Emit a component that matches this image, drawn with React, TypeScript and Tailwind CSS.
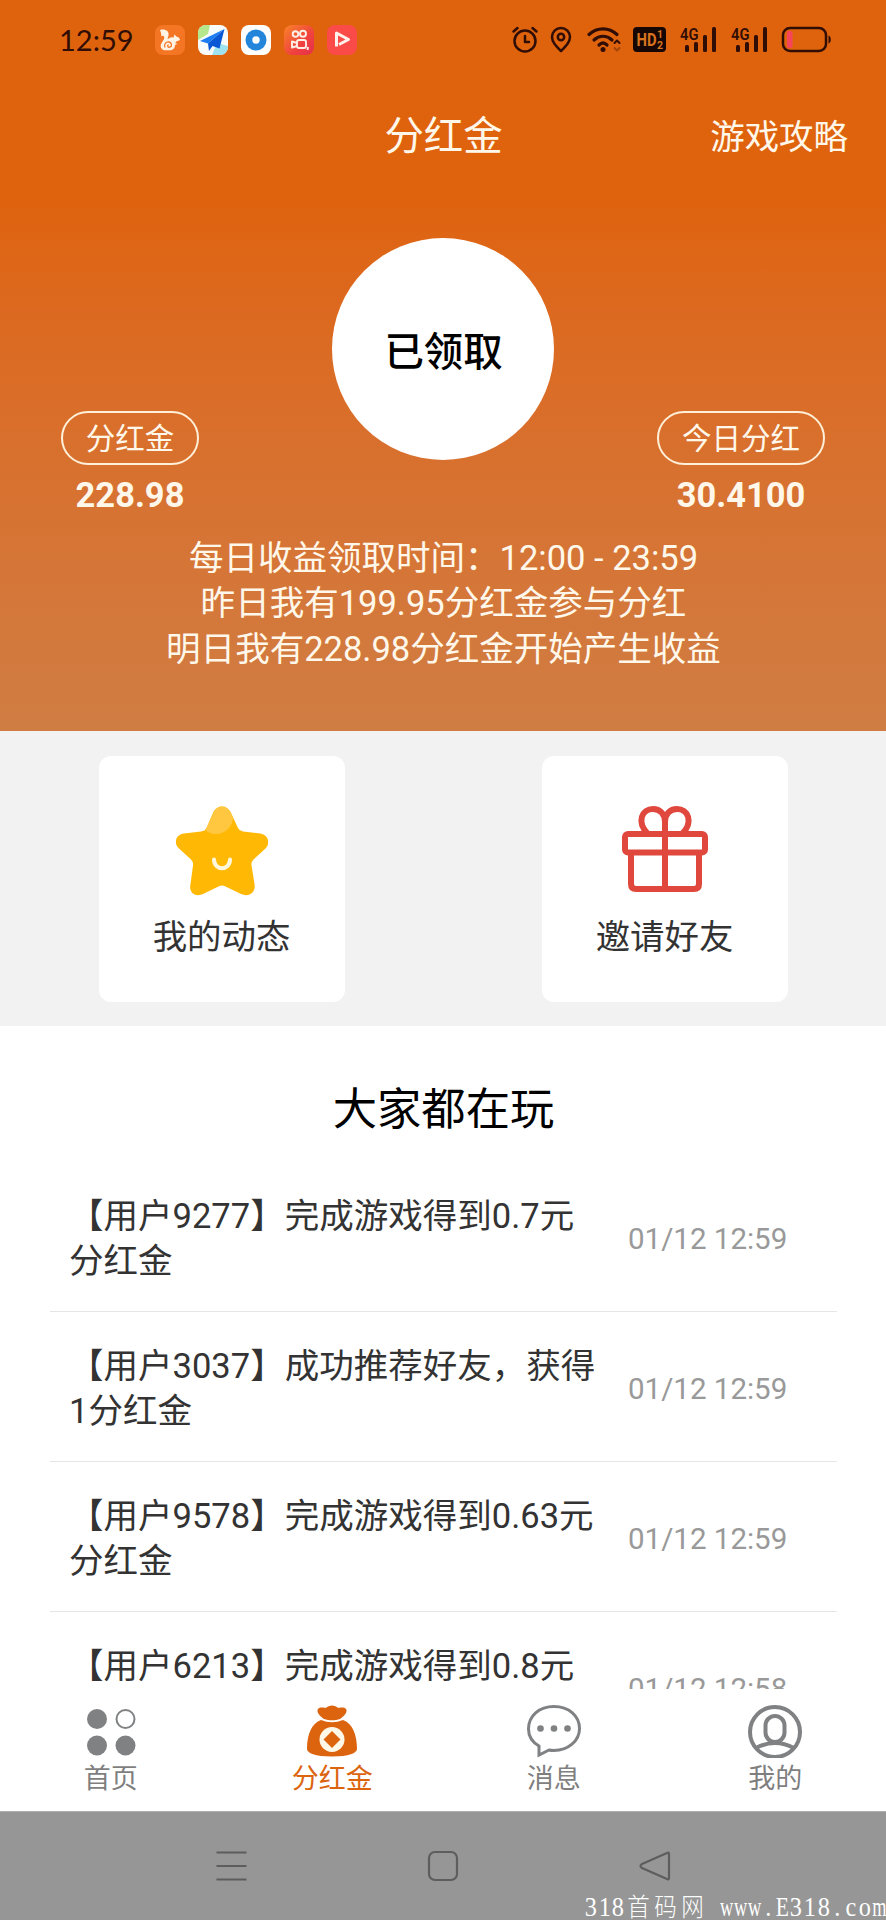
import type { ReactNode } from "react";

const records = [
  { first: "【用户9277】完成游戏得到0.7元", second: "分红金", time: "01/12 12:59" },
  { first: "【用户3037】成功推荐好友，获得", second: "1分红金", time: "01/12 12:59" },
  { first: "【用户9578】完成游戏得到0.63元", second: "分红金", time: "01/12 12:59" },
  { first: "【用户6213】完成游戏得到0.8元", second: "分红金", time: "01/12 12:58" },
];

function AppBadges() {
  return (
    <div className="ml-[22px] flex gap-[13px]">
      <svg width="30" height="30" viewBox="0 0 30 30">
        <rect width="30" height="30" rx="8" fill="#f47624" />
        <path d="M5 5c5-1.500 9.500 1 8.500 5.500-.3 1.500-1 2.500-.8 3.800 1.800-2 4-2.500 6-1.800l.8-3.200 1.800 2.200c2 .3 3.200 1.500 3.700 3-.8 1.200-2 1.700-3.500 1.700-.5 1-1 1.500-1.500 2l2.500.5-2.500 1.300c0 3-1.500 4.700-4 5.200H9.500c-3-.7-4.500-3-3.500-6 .8-2.500 3.500-4.200 3.300-6.700C9 10.500 7 10.500 6 11.500c1-3-.5-4.500-1-6.500z" fill="#fff3e4" />
        <path d="M10 22.500c-1.500-3 1-6 4-5.500 3 .6 3.300 4.500.8 5.200-1.800.4-3-1.700-1.300-2.700" fill="none" stroke="#f47624" strokeWidth="1.300" />
      </svg>
      <svg width="30" height="30" viewBox="0 0 30 30">
        <defs><clipPath id="mapClip"><rect width="30" height="30" rx="8" /></clipPath></defs>
        <g clipPath="url(#mapClip)">
          <rect width="30" height="30" fill="#f7fbfa" />
          <path d="M0 0h12L10 9 0 15z" fill="#b5e78c" />
          <path d="M14 30l5-12 11 3v9z" fill="#9fe3f0" />
          <path d="M26.500 4L2 16l8 2.500z" fill="#1c7cf2" />
          <path d="M26.500 4L10 18.500 11 26l3.500-5 7 2.500z" fill="#0a57d6" />
        </g>
      </svg>
      <svg width="30" height="30" viewBox="0 0 30 30">
        <rect width="30" height="30" rx="8" fill="#fff" />
        <circle cx="15" cy="15" r="10.500" fill="#2386db" />
        <circle cx="15" cy="15" r="3.700" fill="#fff" />
      </svg>
      <svg width="30" height="30" viewBox="0 0 30 30">
        <defs><linearGradient id="camera" x1="0" y1="0" x2="1" y2="1"><stop stopColor="#f98428" /><stop offset=".6" stopColor="#f0423f" /><stop offset="1" stopColor="#e52d4b" /></linearGradient></defs>
        <rect width="30" height="30" rx="8" fill="url(#camera)" />
        <g fill="none" stroke="#fff0e6" strokeWidth="1.900" strokeLinejoin="round">
          <circle cx="11.500" cy="9" r="2.800" /><circle cx="19" cy="8.800" r="3" />
          <rect x="13" y="15" width="9" height="8" rx="2" /><path d="M13 18l-5-1.500v6l5-1.500M24 22l-.5 3" />
        </g>
      </svg>
      <svg width="30" height="30" viewBox="0 0 30 30">
        <rect width="30" height="30" rx="8" fill="#fa4b48" />
        <path d="M9.500 21.500V8l12 6.500-9.500 5" fill="none" stroke="#fff1eb" strokeWidth="3" strokeLinejoin="round" />
      </svg>
    </div>
  );
}

function Signal({ x }: { x: number }) {
  return (
    <g transform={`translate(${x} 0)`} fill="#300d05">
      <text x="0" y="19.500" fontSize="17" fontWeight="600" textLength="18.500" lengthAdjust="spacingAndGlyphs" className="font-['Roboto']">4G</text>
      <rect x="5" y="25" width="4" height="7" rx="1.500" />
      <rect x="14" y="22" width="4" height="10" rx="1.500" />
      <rect x="23" y="15" width="4" height="17" rx="1.500" />
      <rect x="32" y="7" width="4" height="25" rx="1.500" />
    </g>
  );
}

function SystemIcons() {
  return (
    <svg width="330" height="40" viewBox="0 0 330 40">
      <g fill="none" stroke="#300d05" strokeWidth="2.500" strokeLinecap="round" strokeLinejoin="round">
        <circle cx="15" cy="21" r="10.500" /><path d="M15 16v6h4M3.500 11.500l4-3.500M26.500 11.500L22.500 8" />
        <path d="M51 31c-5-5-9-9-9-14a9 9 0 0118 0c0 5-4 9-9 14z" /><circle cx="51" cy="17" r="3.200" />
        <g strokeWidth="3.200"><path d="M79 14.500c8-7.500 20-7.500 28 0M84 20c5.500-5 12.500-5 18 0" /><path d="M89 25c2.500-2.500 5.500-2.500 8 0" /></g>
        <path d="M104.500 23l2.500-2.500 2.500 2.500" strokeWidth="2" />
        <path d="M104.500 28l2.500 2.500 2.500-2.500" strokeWidth="2" opacity=".35" />
        <rect x="273" y="8" width="43" height="23" rx="7" />
      </g>
      <circle cx="93" cy="29.500" r="2.500" fill="#300d05" />
      <rect x="123" y="7" width="33" height="25" rx="4" fill="#170704" />
      <g fill="#d9741f" className="font-['Roboto']" fontWeight="700">
        <text x="126.500" y="26" fontSize="18" textLength="20" lengthAdjust="spacingAndGlyphs">HD</text>
        <text x="147" y="18" fontSize="10.500">1</text><text x="147" y="28.500" fontSize="10.500">2</text>
      </g>
      <Signal x={170} /><Signal x={221} />
      <rect x="277" y="11" width="5.500" height="17" rx="2" fill="#f5455a" />
      <path d="M318.500 15.500c3 .5 3 7.500 0 8z" fill="#300d05" />
    </svg>
  );
}

function Pill({ label, value, width }: { label: string; value: string; width: string }) {
  return (
    <div className="flex flex-col items-center">
      <div className={`${width} flex h-[54px] items-center justify-center rounded-full border-2 border-[#fff0d9] pt-[2px] text-[29.500px] leading-[48px]`}>{label}</div>
      <div className="mt-[7px] text-[34.450px] font-bold leading-[46px]">{value}</div>
    </div>
  );
}

function StarIcon() {
  return (
    <svg width="92" height="90" viewBox="0 0 92 90">
      <defs>
        <clipPath id="starClip">
          <path d="M37.500 6C41-1.500 51-1.500 54.500 6L62 22Q63.500 25 67 25.500L84 27.500C92 28.500 95 37 89.500 42.500L77.500 53.500Q75 56 75.500 59.500L78.500 78C80 86.500 73 91.500 65 88L49.500 80.500Q46 78.500 42.500 80.500L27 88C19 91.500 12.500 86.500 14.500 78L17 59.500Q17.500 56 15 53.500L3 42.500C-3 37 0 28.500 8 27.500L25 25.500Q29 25 30.500 22Z" />
        </clipPath>
      </defs>
      <g clipPath="url(#starClip)">
        <rect width="92" height="90" fill="#ffb803" />
        <circle cx="40" cy="11" r="17" fill="#ffc640" />
      </g>
      <path d="M38 53.500c0 11.500 16 11.500 16 0" fill="none" stroke="#fff7dc" strokeWidth="4" strokeLinecap="round" />
    </svg>
  );
}

function GiftIcon() {
  return (
    <svg width="88" height="90" viewBox="0 0 88 90" fill="none" stroke="#e0483e" strokeWidth="6" strokeLinejoin="round">
      <rect x="4" y="28" width="80" height="18.500" rx="3" />
      <path d="M10 46v32q0 5 5 5h58q5 0 5-5V46M44 9v74" />
      <path d="M27 28C15 16 21 3 32 3c7 0 12 5 12 13v12M61 28C73 16 67 3 56 3c-7 0-12 5-12 13v12" />
    </svg>
  );
}

function Shortcut({ icon, label }: { icon: ReactNode; label: string }) {
  return (
    <div className="flex h-[246px] w-[246px] flex-col items-center rounded-[12px] bg-white pt-[50px] text-[#333]">
      {icon}
      <div className="mt-[18px] text-[34.450px] leading-[46px]">{label}</div>
    </div>
  );
}

function Tab({ icon, label, active }: { icon: ReactNode; label: string; active?: boolean }) {
  return (
    <div className={`flex flex-1 flex-col items-center pt-[15px] ${active ? "text-[#dc640f]" : "text-[#7f7f7f]"}`}>
      {icon}
      <div className="mt-[4px] text-[27px] leading-[34px]">{label}</div>
    </div>
  );
}

export default function App() {
  return (
    <div className="flex h-[1920px] w-[886px] flex-col overflow-hidden bg-white font-['Roboto','Noto_Sans_CJK_SC',sans-serif]">
      <header className="flex h-[731px] shrink-0 flex-col bg-linear-to-b from-[#df630d] from-27% to-[#d07d43] text-[#fff8ea]">
        <div className="flex h-[79px] items-center pl-[59px] pr-[46px]">
          <span className="w-[74px] whitespace-nowrap font-['Lato'] text-[29px] leading-[40px] text-[#300d05]">12:59</span>
          <AppBadges />
          <div className="ml-auto h-[40px]"><SystemIcons /></div>
        </div>
        <div className="grid h-[116px] grid-cols-3 items-center">
          <span />
          <h1 className="pl-px text-center text-[39.400px] leading-[52px]">分红金</h1>
          <span className="pr-[38px] text-right text-[34.450px] leading-[46px]">游戏攻略</span>
        </div>
        <div className="flex h-[333px] items-start justify-between pl-[61px] pr-[61px] pt-[43px]">
          <div className="flex w-[168px] justify-start pt-[173px]"><Pill label="分红金" value="228.98" width="w-[138px]" /></div>
          <div className="flex h-[222px] w-[222px] items-center justify-center rounded-full bg-white text-[39.400px] font-medium text-black"><span className="pl-px pt-[7px] leading-[52px]">已领取</span></div>
          <div className="flex w-[168px] justify-end pt-[173px]"><Pill label="今日分红" value="30.4100" width="w-[168px]" /></div>
        </div>
        <div className="pl-px pt-[8px] text-center text-[34.520px] leading-[45.300px]">
          <p>每日收益领取时间：12:00 - 23:59</p>
          <p>昨日我有199.95分红金参与分红</p>
          <p>明日我有228.98分红金开始产生收益</p>
        </div>
      </header>

      <section className="flex h-[295px] shrink-0 items-center justify-around bg-[#f2f2f2]">
        <Shortcut icon={<StarIcon />} label="我的动态" />
        <Shortcut icon={<GiftIcon />} label="邀请好友" />
      </section>

      <main className="h-[663px] shrink-0 overflow-hidden pl-[50px] pr-[49px] pt-[55px]">
        <h2 className="mb-[23px] text-center text-[44.300px] leading-[58px] text-black">大家都在玩</h2>
        {records.map((record) => (
          <div key={record.first} className="flex h-[150px] items-center border-b border-[#e6e6e6] pl-[19px] pt-[5px] text-[34.520px] leading-[45.300px] text-[#333]">
            <div className="w-[559px] whitespace-nowrap"><p>{record.first}</p><p>{record.second}</p></div>
            <span className="whitespace-nowrap text-[29.500px] leading-[40px] text-[#999]">{record.time}</span>
          </div>
        ))}
      </main>

      <nav className="flex h-[122px] shrink-0 bg-white">
        <Tab label="首页" icon={
          <svg width="54" height="54" viewBox="0 0 54 54" fill="#7f8183">
            <circle cx="13" cy="15" r="10" /><circle cx="13" cy="41.500" r="10" /><circle cx="41.500" cy="41.500" r="10" />
            <circle cx="41.500" cy="15" r="9" fill="none" stroke="#7f8183" strokeWidth="2" />
          </svg>
        } />
        <Tab active label="分红金" icon={
          <svg width="54" height="54" viewBox="0 0 54 54" fill="#dc640f">
            <path d="M19 15C15 12 12 9 12.500 6c1-3 5-2.500 8-2 4-3.500 9-3.500 13 0 3-.5 7-1 8 2 .5 3-2.500 6-6.500 9-5 1.800-11 1.800-16 0z" />
            <path d="M16 16q11 4.500 22 0c9 3 14 14 14 29 0 4-8 7.500-25 7.500S2 49 2 45c0-15 5-26 14-29z" />
            <circle cx="27" cy="35.500" r="12.500" fill="#fff8e8" /><path d="M27 27l8.500 8.500L27 44l-8.500-8.500z" />
          </svg>
        } />
        <Tab label="消息" icon={
          <svg width="54" height="54" viewBox="0 0 54 54" fill="none" stroke="#7f8183" strokeWidth="3">
            <path d="M12 42C5 38 1.500 32 1.500 25 1.500 12 12 2.500 27 2.500S52.500 12 52.500 24.500 41 46.500 27 46.500q-3 0-5-.5L12 51z" />
            <g fill="#7f8183" stroke="none"><circle cx="13.500" cy="24.500" r="3.300" /><circle cx="27" cy="24.500" r="3.300" /><circle cx="40.500" cy="24.500" r="3.300" /></g>
          </svg>
        } />
        <Tab label="我的" icon={
          <svg width="54" height="54" viewBox="0 0 54 54" fill="none" stroke="#7f8183" strokeWidth="4">
            <circle cx="27" cy="28" r="25" /><rect x="17.500" y="12" width="19" height="26" rx="9.500" /><path d="M8 44q19-10 38 0" />
          </svg>
        } />
      </nav>

      <footer className="relative flex h-[109px] shrink-0 border-t border-[#b0b0b0] bg-[#969696] pl-[214px] pt-[36px]">
        <svg width="458" height="34" viewBox="0 0 458 34" fill="none" stroke="#5d5d5d" strokeWidth="2.200" strokeLinejoin="round">
          <path d="M2.500 4.500h30M2.500 18h30M2.500 31.500h30" />
          <rect x="215" y="4" width="28" height="28" rx="6" />
          <path d="M453 5L428 16q-3 2 0 4l25 11q2 1 2-1V6q0-2-2-1z" />
        </svg>
        <div className="absolute bottom-[-2px] right-0 flex h-[29px] items-center whitespace-pre font-['Liberation_Serif','Noto_Sans_CJK_SC',serif] text-[27px] leading-[29px] text-white">
          {[..."318首码网 www.E318.com"].map((char, index) => (
            <span key={index} className={`flex justify-center ${char > "~" ? "w-[27px] text-[25px] font-light" : "w-[13.850px]"}`}>
              <span className={char === "w" || char === "m" ? "scale-x-[0.68]" : char === "E" ? "scale-x-[0.8]" : "scale-x-[0.9]"}>{char}</span>
            </span>
          ))}
        </div>
      </footer>
    </div>
  );
}
